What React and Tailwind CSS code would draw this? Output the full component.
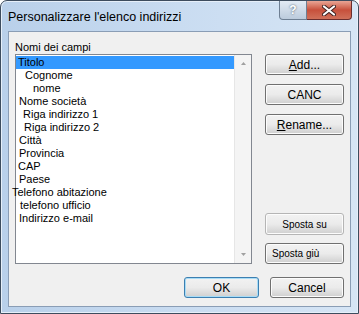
import React from 'react';

const fields = [
  { label: 'Titolo', pl: 'pl-[2px]', selected: true },
  { label: 'Cognome', pl: 'pl-[9px]' },
  { label: 'nome', pl: 'pl-[17px]' },
  { label: 'Nome società', pl: 'pl-[3px]' },
  { label: 'Riga indirizzo 1', pl: 'pl-[7px]' },
  { label: 'Riga indirizzo 2', pl: 'pl-[8px]' },
  { label: 'Città', pl: 'pl-[3px]' },
  { label: 'Provincia', pl: 'pl-[3px]' },
  { label: 'CAP', pl: 'pl-[2px]' },
  { label: 'Paese', pl: 'pl-[3px]' },
  { label: 'Telefono abitazione', pl: 'pl-0 -ml-[4px]' },
  { label: 'telefono ufficio', pl: 'pl-[4px]' },
  { label: 'Indirizzo e-mail', pl: 'pl-[3px]' },
];

const WinButton = ({ children, className = '', textClass = 'text-[12px]', def = false }) => (
  <button
    className={`flex items-center justify-center rounded-[3px] border ${
      def ? 'border-[#3c7fb1] shadow-[inset_0_0_0_1px_#a8dcf6]' : 'border-[#707070] shadow-[inset_0_0_0_1px_#fcfcfc]'
    } bg-gradient-to-b from-[#f2f2f2] via-[#ebebeb] to-[#cfcfcf] text-black ${textClass} ${className}`}
  >
    {children}
  </button>
);

const FieldList = () => (
  <div className="flex h-[210px] w-[237px] border border-[#828790] bg-white">
    <div className="flex-1 pt-[1px] text-[11px]">
      {fields.map((f) => (
        <div
          key={f.label}
          className={`flex h-[13px] items-center leading-[13px] ${f.selected ? 'bg-[#3399ff]' : ''}`}
        >
          <span className={`${f.pl} whitespace-nowrap`}>{f.label}</span>
        </div>
      ))}
    </div>
    {/* scrollbar */}
    <div className="flex w-[17px] flex-col justify-between border-l border-[#e6e6e6] bg-[#f4f4f4] py-[5px]">
      <svg width="17" height="6" viewBox="0 0 17 6">
        <path d="M6 5 L8.5 2 L11 5 Z" fill="#a0a0a0" />
      </svg>
      <svg width="17" height="6" viewBox="0 0 17 6">
        <path d="M6 1 L8.5 4 L11 1 Z" fill="#a0a0a0" />
      </svg>
    </div>
  </div>
);

const App = () => {
  return (
    <div
      className="flex h-[314px] w-[359px] flex-col rounded-t-[7px] border border-[#3d4c5e] bg-gradient-to-r from-[#b9d0ea] via-[#c9dcf1] to-[#d6e5f5] px-[7px] pb-[6px] shadow-[inset_0_0_0_1px_#e6eff9]"
      style={{ fontFamily: '"Liberation Sans", Arial, sans-serif' }}
    >
      {/* title bar */}
      <div className="flex h-[30px] items-start justify-between">
        <div className="pt-[7px] text-[12.5px] text-black">Personalizzare l'elenco indirizzi</div>
        <div className="-mr-[1px] flex">
          <div className="flex h-[19px] w-[28px] items-center justify-center rounded-bl-[4px] border border-t-0 border-[#6e7f93] bg-gradient-to-b from-[#e3ebf4] to-[#bccbdc] text-[12px] font-bold text-white [text-shadow:0_0_2px_#3a4a5c]">
            ?
          </div>
          <div className="flex h-[19px] w-[45px] items-center justify-center rounded-br-[4px] border border-t-0 border-l-0 border-[#6b2d2d] bg-gradient-to-b from-[#e8a595] via-[#c7503c] to-[#d0705a]">
            <svg width="14" height="11" viewBox="0 0 14 11">
              <path d="M2 1.5 L12 9.5 M12 1.5 L2 9.5" stroke="#3b2020" strokeWidth="4" strokeLinecap="round" />
              <path d="M2 1.5 L12 9.5 M12 1.5 L2 9.5" stroke="#ffffff" strokeWidth="2.2" strokeLinecap="round" />
            </svg>
          </div>
        </div>
      </div>

      {/* client area */}
      <div className="flex flex-1 flex-col border border-[#8a9db5] bg-[#f0f0f0] px-[6px] pt-[8px]">
        <div className="h-[14px] text-[11px] leading-[14px] text-black">Nomi dei campi</div>
        <div className="flex gap-[13px]">
          <FieldList />
          <div className="flex w-[79px] flex-col">
            <WinButton className="h-[21px] w-[79px]">
              <span><span className="underline">A</span>dd...</span>
            </WinButton>
            <WinButton className="mt-[9px] h-[21px] w-[79px]">CANC</WinButton>
            <WinButton className="mt-[9px] h-[21px] w-[79px]">
              <span><span className="underline">R</span>ename...</span>
            </WinButton>
            <WinButton
              className="mt-[78px] h-[22px] w-[79px] !border-[#b5b5b5]"
              textClass="text-[10px]"
            >
              Sposta su
            </WinButton>
            <WinButton className="mt-[8px] h-[21px] w-[79px] !justify-start pl-[6px]" textClass="text-[10px]">
              Sposta giù
            </WinButton>
          </div>
        </div>
        <div className="mt-[13px] flex justify-end gap-[11px] pr-[0px]">
          <WinButton def className="h-[21px] w-[75px]">OK</WinButton>
          <WinButton className="h-[21px] w-[74px]">Cancel</WinButton>
        </div>
      </div>
    </div>
  );
};

export default App;
